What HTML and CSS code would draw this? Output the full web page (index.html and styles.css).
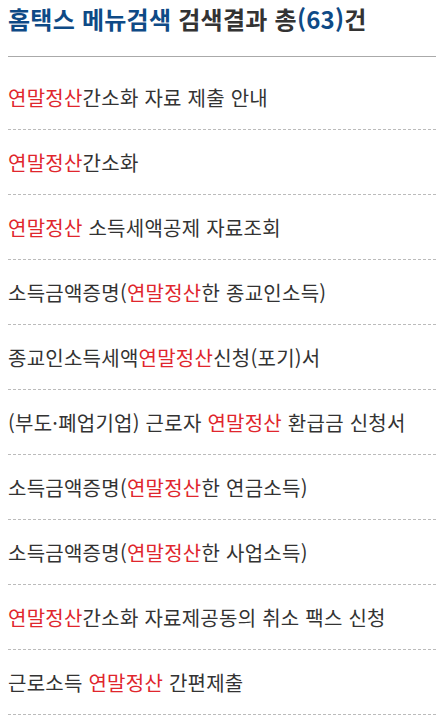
FILE: index.html
```html
<!DOCTYPE html>
<html lang="ko">
<head>
<meta charset="utf-8">
<link rel="stylesheet" href="styles.css">
</head>
<body>
<div class="header">
  <h1 class="title"><span class="blue">홈택스 메뉴검색</span> 검색결과 총<span class="blue num">(63)</span>건</h1>
</div>
<ul class="results">
  <li><span class="hl">연말정산</span>간소화 자료 제출 안내</li>
  <li><span class="hl">연말정산</span>간소화</li>
  <li><span class="hl">연말정산</span> 소득세액공제 자료조회</li>
  <li>소득금액증명(<span class="hl">연말정산</span>한 종교인소득)</li>
  <li>종교인소득세액<span class="hl">연말정산</span>신청(포기)서</li>
  <li>(부도·폐업기업) 근로자 <span class="hl">연말정산</span> 환급금 신청서</li>
  <li>소득금액증명(<span class="hl">연말정산</span>한 연금소득)</li>
  <li>소득금액증명(<span class="hl">연말정산</span>한 사업소득)</li>
  <li><span class="hl">연말정산</span>간소화 자료제공동의 취소 팩스 신청</li>
  <li>근로소득 <span class="hl">연말정산</span> 간편제출</li>
</ul>
</body>
</html>
```
FILE: styles.css
```css
html, body {
  margin: 0;
  padding: 0;
  background: #fff;
}
body {
  padding: 0 0 0 8px;
  font-family: "Noto Sans CJK KR", "Noto Sans", sans-serif;
  color: #333;
  overflow: hidden;
}
.header {
  border-bottom: 1px solid #aaa;
  padding-top: 4px;
  height: 52px;
  box-sizing: content-box;
}
.title {
  margin: 0;
  font-size: 24px;
  line-height: 30px;
  font-weight: 700;
  color: #333;
  letter-spacing: 0.25px;
}
.blue {
  color: #0e4a86;
}
.results {
  list-style: none;
  margin: 8px 0 0 0;
  padding: 0;
}
.results li {
  height: 64px;
  line-height: 66px;
  border-bottom: 1px dashed #bbb;
  font-size: 20px;
  letter-spacing: 0.25px;
  color: #333;
  white-space: nowrap;
}
.hl {
  color: #e0262d;
}
```
